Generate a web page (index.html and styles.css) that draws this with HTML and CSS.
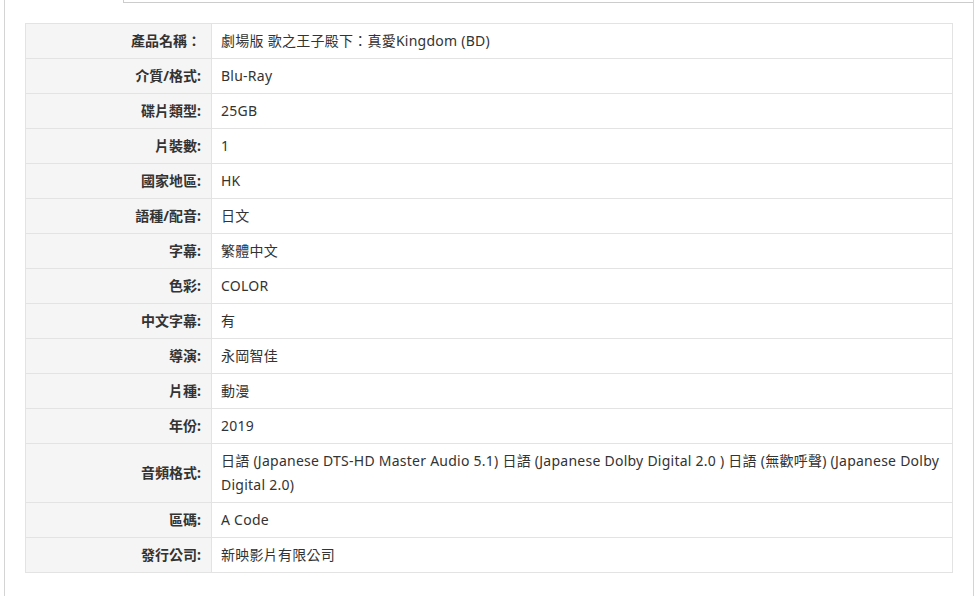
FILE: index.html
```html
<!DOCTYPE html>
<html lang="zh-Hant">

<head>
    <meta charset="UTF-8">
    <meta name="viewport" content="width=device-width, initial-scale=1.0">
    <title>產品資料</title>
    <link rel="stylesheet" href="styles.css">
</head>

<body>
    <div class="panel">
        <div class="tabs">
            <div class="tab active"></div>
            <div class="tab-rest"></div>
        </div>

        <table class="spec">
            <tr><th>產品名稱：</th><td>劇場版 歌之王子殿下：真愛Kingdom (BD)</td></tr>
            <tr><th>介質/格式:</th><td>Blu-Ray</td></tr>
            <tr><th>碟片類型:</th><td>25GB</td></tr>
            <tr><th>片裝數:</th><td>1</td></tr>
            <tr><th>國家地區:</th><td>HK</td></tr>
            <tr><th>語種/配音:</th><td>日文</td></tr>
            <tr><th>字幕:</th><td>繁體中文</td></tr>
            <tr><th>色彩:</th><td>COLOR</td></tr>
            <tr><th>中文字幕:</th><td>有</td></tr>
            <tr><th>導演:</th><td>永岡智佳</td></tr>
            <tr><th>片種:</th><td>動漫</td></tr>
            <tr><th>年份:</th><td>2019</td></tr>
            <tr><th>音頻格式:</th><td>日語 (Japanese DTS-HD Master Audio 5.1) 日語 (Japanese Dolby Digital 2.0 ) 日語 (無歡呼聲) (Japanese Dolby Digital 2.0)</td></tr>
            <tr><th>區碼:</th><td>A Code</td></tr>
            <tr><th>發行公司:</th><td>新映影片有限公司</td></tr>
        </table>
    </div>
</body>

</html>
```

FILE: styles.css
```css
body {
    font-family: "Noto Sans", "Noto Sans CJK TC", sans-serif;
    font-size: 14px;
    color: #333;
    margin: 0;
    background: #fff;
}

.panel {
    margin-left: 4px;
    width: 968px;
    height: 596px;
    border-left: 1px solid #d4d4d4;
    border-right: 1px solid #d4d4d4;
}

.tabs {
    display: flex;
    height: 3px;
}

.tab.active {
    width: 118px;
    border-right: 1px solid #ccc;
}

.tab-rest {
    flex: 1;
    border-bottom: 1px solid #ccc;
}

.spec {
    border-collapse: collapse;
    margin: 20px 0 0 20px;
    width: 928px;
    border: 1px solid #e3e3e3;
}

.spec th,
.spec td {
    border: 1px solid #e3e3e3;
    padding: 5px 10px;
    line-height: 24px;
    vertical-align: middle;
}

.spec th {
    width: 165px;
    text-align: right;
    font-weight: bold;
    background: #f5f5f5;
    color: #333;
}

.spec td {
    text-align: left;
    font-weight: normal;
    padding-left: 9px;
    letter-spacing: 0.25px;
}
```
